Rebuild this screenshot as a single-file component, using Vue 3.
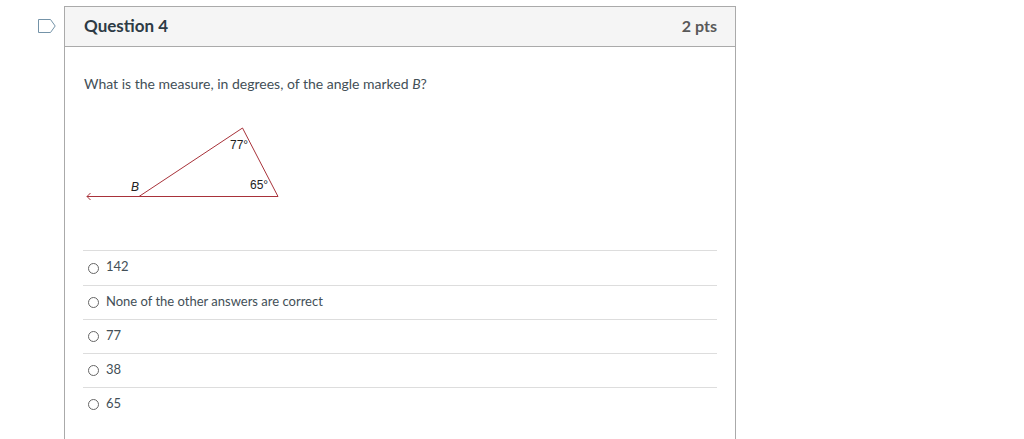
<script setup>
const answers = ['142', 'None of the other answers are correct', '77', '38', '65']
</script>

<template>
  <main class="page">
    <button class="flag" type="button" aria-label="Flag question">
      <svg width="20" height="16" viewBox="0 0 20 16"><path d="M2.5 1.5H14.5L19.2 8L14.5 14.5H2.5Z" /></svg>
    </button>
    <section class="question">
      <header class="head">
        <h2>Question 4</h2>
        <span class="points">2 pts</span>
      </header>
      <div class="body">
        <p class="prompt">What is the measure, in degrees, of the angle marked <em>B</em>?</p>
        <svg class="figure" width="200" height="80" viewBox="83 122 200 80" role="img" aria-label="Triangle with angles 77° and 65° and exterior angle B">
          <path d="M87 196.5H278L242.5 128L139 196.5M90.5 193L87 196.5L90.5 200" />
          <text x="131" y="191" class="var">B</text>
          <text x="230" y="149">77°</text>
          <text x="250" y="189">65°</text>
        </svg>
        <form class="answers">
          <label v-for="a in answers" :key="a" class="answer">
            <input type="radio" name="answer" :value="a" />
            <span>{{ a }}</span>
          </label>
        </form>
      </div>
    </section>
  </main>
</template>

<style>
html, body { overflow: hidden; }
</style>

<style scoped>
.page {
  display: grid;
  grid-template-columns: 28px minmax(0, 672px);
  padding: 6px 288px 0 36px;
  box-sizing: border-box;
  font-family: Lato, "Liberation Sans", sans-serif;
  color: #2d3b45;
  background: #fff;
}
.flag { align-self: start; margin: 12px 0 0; padding: 0; border: 0; background: none; display: flex; }
.flag path { fill: #fff; stroke: #7493a8; stroke-width: 1; }
.question { border: 1px solid #aaa; }
.head {
  display: flex;
  align-items: center;
  justify-content: space-between;
  box-sizing: border-box;
  height: 40px;
  padding: 0 18px 2px 19px;
  background: #f5f5f5;
  border-bottom: 1px solid #aaa;
}
h2 { margin: 0; font-size: 17px; font-weight: 700; }
.points { font-size: 16px; font-weight: 700; color: #595959; }
.body { padding: 26px 18px 20px; color: #434f57; }
.prompt { margin: 0; padding-left: 1px; font-size: 14px; line-height: 21px; }
.figure { display: block; margin: 28px 0 48px; }
.figure path { fill: none; stroke: #a8323a; stroke-width: 1; }
.figure text { font: 12px "Liberation Sans", Arial, sans-serif; fill: #222; }
.figure .var { font-style: italic; }
.answers { border-top: 1px solid #ddd; }
.answer {
  display: flex;
  align-items: center;
  gap: 7px;
  box-sizing: border-box;
  height: 34px;
  padding-left: 5px;
  font-size: 13px;
}
.answer + .answer { border-top: 1px solid #ddd; }
.answer span { padding-bottom: 4px; }
input {
  appearance: none;
  width: 11px;
  height: 11px;
  margin: 0;
  border: 1px solid #666;
  border-radius: 50%;
  background: #fff;
}
</style>
